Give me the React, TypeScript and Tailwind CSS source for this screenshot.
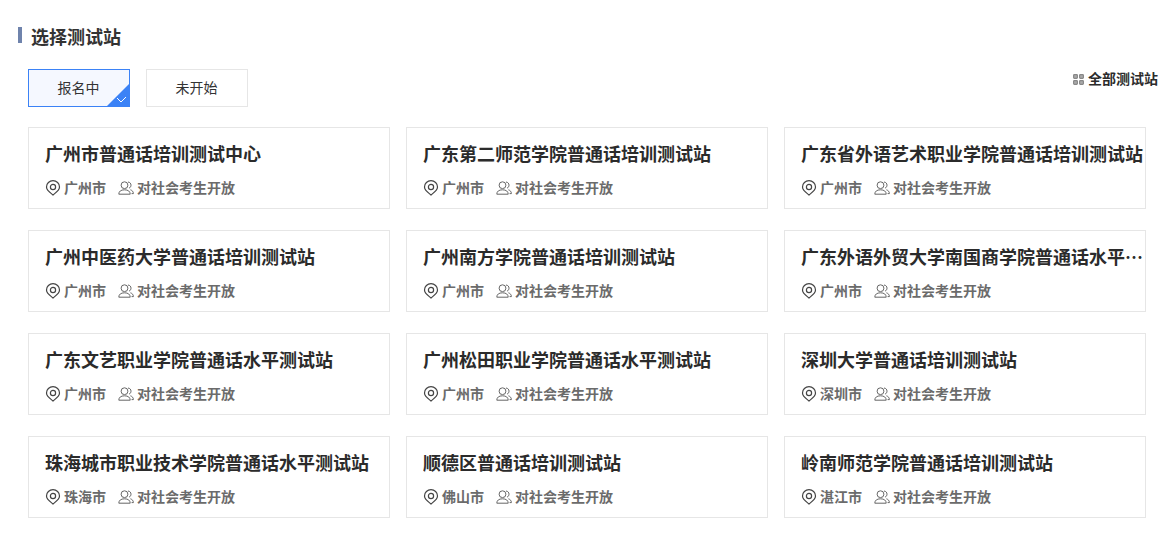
const FONT = "font-['Noto_Sans_CJK_SC','Liberation_Sans',sans-serif]";

const stations = [
  { name: "广州市普通话培训测试中心", city: "广州市" },
  { name: "广东第二师范学院普通话培训测试站", city: "广州市" },
  { name: "广东省外语艺术职业学院普通话培训测试站", city: "广州市" },
  { name: "广州中医药大学普通话培训测试站", city: "广州市" },
  { name: "广州南方学院普通话培训测试站", city: "广州市" },
  { name: "广东外语外贸大学南国商学院普通话水平测试站", city: "广州市" },
  { name: "广东文艺职业学院普通话水平测试站", city: "广州市" },
  { name: "广州松田职业学院普通话水平测试站", city: "广州市" },
  { name: "深圳大学普通话培训测试站", city: "深圳市" },
  { name: "珠海城市职业技术学院普通话水平测试站", city: "珠海市" },
  { name: "顺德区普通话培训测试站", city: "佛山市" },
  { name: "岭南师范学院普通话培训测试站", city: "湛江市" },
];

function PinIcon() {
  return (
    <svg width="16" height="16" viewBox="0 0 16 16" fill="none" stroke="#444" strokeWidth="1.2" className="shrink-0 translate-y-px">
      <path d="M8 15 C6.6 13.6 1.5 10.6 1.5 6.9 A6.5 6.2 0 0 1 14.5 6.9 C14.5 10.6 9.4 13.6 8 15 Z" />
      <circle cx="8" cy="7" r="2.6" />
    </svg>
  );
}

function PeopleIcon() {
  return (
    <svg width="16" height="16" viewBox="0 0 16 16" fill="none" stroke="#666" strokeWidth="1" className="shrink-0 translate-y-px">
      <circle cx="6.5" cy="5.2" r="3.4" />
      <path d="M0.8 14.2 C0.8 11.3 3 9.8 6.5 9.8 C10 9.8 12.2 11.3 12.2 14.2 Z" />
      <path d="M10 2 C12 2.2 13 3.6 13 5.2 C13 6.6 12.2 7.6 11 8.2" />
      <path d="M12.4 9.8 C14.2 10.4 15.4 11.6 15.4 13.6 L13.6 13.6" />
    </svg>
  );
}

function StationCard({ name, city }: { name: string; city: string }) {
  return (
    <div className="h-[82px] min-w-0 border border-[#e6e6e6] bg-white pr-px pt-[11px] pl-[16px]">
      <div className="truncate text-[18px] leading-[28px] font-bold text-[#2b2b2b]">{name}</div>
      <div className="mt-[10px] flex items-center text-[14px] leading-[20px] font-bold text-[#6b6b6b]">
        <PinIcon />
        <span className="ml-[3px]">{city}</span>
        <span className="ml-[12px] flex items-center">
          <PeopleIcon />
          <span className="ml-[3px]">对社会考生开放</span>
        </span>
      </div>
    </div>
  );
}

export default function App() {
  return (
    <div className={`h-[534px] w-[1170px] overflow-hidden bg-white pr-[12px] pl-[18px] ${FONT}`}>
      {/* Heading */}
      <div className="flex items-center pt-[24px]">
        <div className="h-[16px] w-[4px] -translate-y-px bg-[#6f83ac]" />
        <h2 className="ml-[9px] text-[18px] leading-[24px] font-bold text-[#333]">选择测试站</h2>
      </div>

      {/* Tabs */}
      <div className="mt-[21px] flex items-start justify-between pl-[10px]">
        <div className="flex gap-[16px]">
          <button className="relative h-[38px] w-[102px] overflow-hidden border border-[#3b82f6] bg-[#f5f8ff] pr-px pb-px text-[14px] text-[#333]">
            报名中
            <svg width="22" height="22" viewBox="0 0 22 22" className="absolute right-0 bottom-0">
              <path d="M22 0 V22 H0 Z" fill="#3b82f6" />
              <path d="M10 14 L14 18 L19 13" fill="none" stroke="#fff" strokeWidth="1" />
            </svg>
          </button>
          <button className="h-[38px] w-[102px] border border-[#e6e6e6] bg-white pr-px pb-px text-[14px] text-[#333]">未开始</button>
        </div>
        <div className="-mt-px flex items-center gap-[4px] text-[14px] leading-[20px] font-bold text-[#2b2b2b]">
          <svg width="11" height="11" viewBox="0 0 11 11" fill="#aaa" stroke="#888" strokeWidth="1.2" className="translate-y-px">
            <rect x="0.6" y="0.6" width="3.8" height="3.8" rx="0.8" />
            <rect x="6.6" y="0.6" width="3.8" height="3.8" rx="0.8" />
            <rect x="0.6" y="6.6" width="3.8" height="3.8" rx="0.8" />
            <rect x="6.6" y="6.6" width="3.8" height="3.8" rx="0.8" />
          </svg>
          全部测试站
        </div>
      </div>

      {/* Stations */}
      <div className="mt-[20px] ml-[10px] grid w-[1118px] grid-cols-3 gap-x-[16px] gap-y-[21px]">
        {stations.map((s) => (
          <StationCard key={s.name} name={s.name} city={s.city} />
        ))}
      </div>
    </div>
  );
}
